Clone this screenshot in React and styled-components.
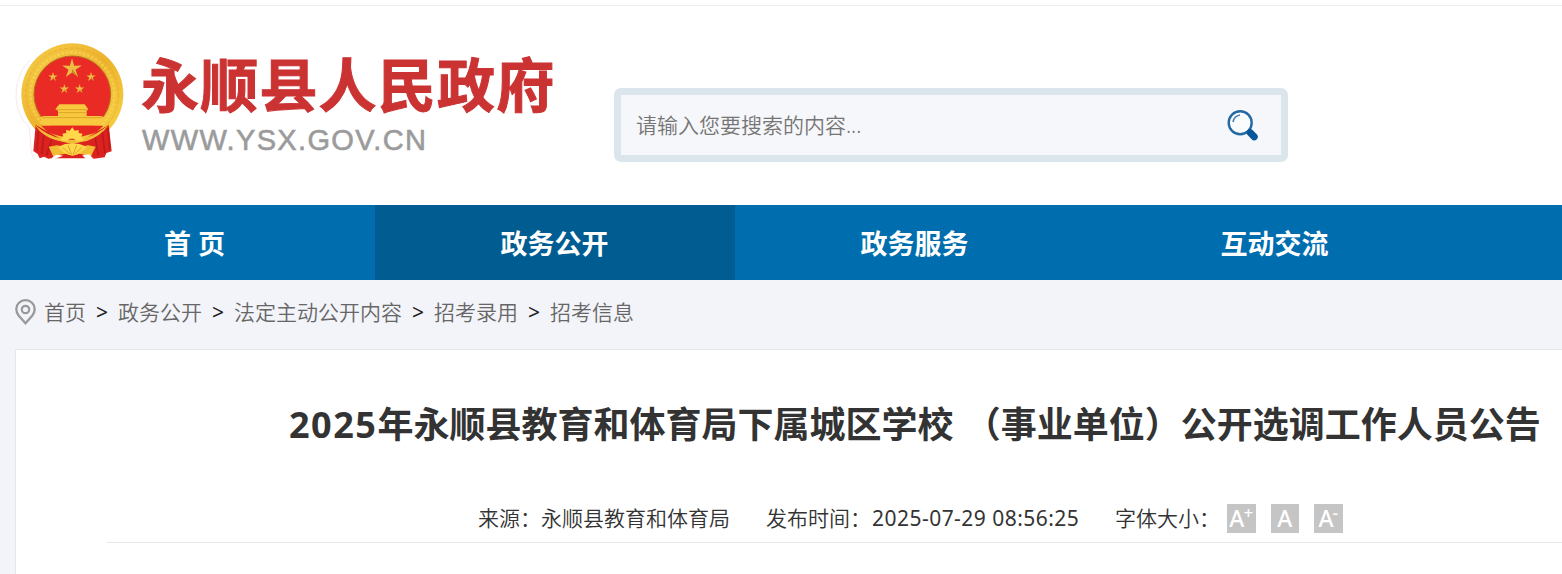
import React from "react";
import styled, { createGlobalStyle } from "styled-components";

const GlobalStyle = createGlobalStyle`
  * {
    box-sizing: border-box;
  }

  body {
    margin: 0;
    overflow: hidden;
    background: #f3f4f9;
    font-family: "Noto Sans", "Noto Sans CJK SC", sans-serif;
    color: #333;
  }
`;

const Page = styled.div`
  width: 1562px;
  height: 574px;
  overflow: hidden;
  display: flex;
  flex-direction: column;
`;

const TopLine = styled.div`
  height: 6px;
  flex: none;
  background: #fff;
  border-bottom: 1px solid #eee;
`;

const Header = styled.header`
  height: 199px;
  flex: none;
  display: flex;
  align-items: flex-start;
  background: #fff;
`;

const StyledEmblem = styled.svg`
  width: 140px;
  height: 145px;
  margin-top: 24px;
`;

const SiteName = styled.div`
  width: 474px;
  padding: 38px 0 0 1px;
`;

const SiteTitle = styled.h1`
  margin: 0;
  font-family: "Noto Sans CJK SC", sans-serif;
  font-size: 58px;
  line-height: 76px;
  font-weight: 700;
  letter-spacing: 1.2px;
  white-space: nowrap;
  color: #cb3333;
  -webkit-text-stroke: 1px #cb3333;
`;

const SiteUrl = styled.div`
  margin-top: 4px;
  padding-left: 1px;
  font-family: "Liberation Sans", Arial, sans-serif;
  font-size: 29px;
  line-height: 32px;
  letter-spacing: 1.35px;
  color: #9b9b9b;
  -webkit-text-stroke: 0.6px #9b9b9b;
`;

const SearchBox = styled.div`
  width: 674px;
  height: 74px;
  margin-top: 82px;
  padding: 0 22px 0 15px;
  display: flex;
  align-items: center;
  justify-content: space-between;
  background: #f5f7fa;
  background-clip: padding-box;
  border: 7px solid #dbe6ec;
  border-radius: 7px;
`;

const Placeholder = styled.span`
  font-size: 21px;
  line-height: 30px;
  font-weight: 350;
  color: #757575;
`;

const StyledSearchIcon = styled.svg`
  width: 34px;
  height: 34px;
`;

const Nav = styled.nav`
  height: 75px;
  flex: none;
  display: flex;
  padding-left: 15px;
  background: #006eae;
`;

const NavItem = styled.a`
  width: 360px;
  height: 75px;
  padding-right: 1px;
  line-height: 78px;
  text-align: center;
  font-size: 27px;
  font-weight: 700;
  color: #fff;
  background: ${({ $active }) => ($active ? "#005c91" : "transparent")};
`;

const Breadcrumb = styled.div`
  height: 69px;
  flex: none;
  display: flex;
  align-items: flex-start;
  padding: 17px 0 0 15px;
  font-size: 21px;
  line-height: 30px;
`;

const StyledPin = styled.svg`
  width: 21px;
  height: 26px;
  margin: 2px 8px 0 0;
`;

const Crumb = styled.a`
  font-weight: 350;
  color: #666;
`;

const Arrow = styled.span`
  width: 32px;
  text-align: center;
  color: #222;
`;

const Article = styled.main`
  flex: 1;
  margin-left: 15px;
  background: #fff;
  border: 1px solid #e6e6e6;
  border-right: 0;
  border-bottom: 0;
`;

const ArticleTitle = styled.h2`
  height: 54px;
  margin: 48px 0 0 273px;
  font-size: 36px;
  line-height: 54px;
  font-weight: 700;
  white-space: pre;
  word-spacing: 2px;
  color: #333;
`;

const TitleYear = styled.span`
  letter-spacing: 1.5px;
`;

const Meta = styled.div`
  height: 43px;
  margin: 48px 0 0 91px;
  padding-left: 371px;
  display: flex;
  align-items: flex-start;
  border-bottom: 1px solid #e6e6e6;
  font-size: 21px;
  line-height: 36px;
  font-weight: 350;
  white-space: nowrap;
`;

const MetaItem = styled.span`
  width: ${({ $width }) => $width}px;
`;

const MetaTime = styled.span`
  padding-left: 1px;
  font-weight: 400;
  letter-spacing: 0.47px;
`;

const SizeButtons = styled.div`
  display: flex;
  gap: 15px;
  padding-top: 4px;
`;

const SizeButton = styled.span`
  width: 28.5px;
  height: 29px;
  display: flex;
  justify-content: center;
  background: #c5c5c5;
  color: #fff;
  font-size: 23px;
  line-height: 29px;
  font-weight: 500;

  sup {
    margin-left: -1px;
    font-size: 17px;
    line-height: 17px;
  }
`;

// five-pointed star with its tip up
const starPoints = (cx, cy, r) =>
  Array.from({ length: 10 }, (_, i) => {
    const radius = i % 2 ? r * 0.36 : r;
    const angle = (Math.PI / 5) * i - Math.PI / 2;
    return `${cx + radius * Math.cos(angle)},${cy + radius * Math.sin(angle)}`;
  }).join(" ");

const stars = [
  [216, 116, 31],
  [159, 141, 15],
  [273, 141, 15],
  [193, 177, 15],
  [239, 177, 15],
];

const Emblem = () => (
  <StyledEmblem viewBox="0 0 420 435">
    <defs>
      <linearGradient id="gold" x1="0" y1="0" x2="1" y2="1">
        <stop offset="0" stopColor="#f6ce48" />
        <stop offset="0.5" stopColor="#edb32d" />
        <stop offset="1" stopColor="#f8d548" />
      </linearGradient>
    </defs>
    <path d="M90 90Q45 135 48 205Q53 260 88 292L94 370L103 384" fill="none" stroke="#f8e9e7" strokeWidth="3" />
    <circle cx="217" cy="193" r="153" fill="url(#gold)" />
    <circle cx="217" cy="193" r="139" fill="none" stroke="#e3a42b" strokeWidth="3" strokeDasharray="12 5" opacity="0.6" />
    <circle cx="217" cy="193" r="126" fill="none" stroke="#fbd75a" strokeWidth="8" strokeDasharray="9 4" opacity="0.6" />
    <circle cx="217" cy="193" r="115" fill="#ea2b25" stroke="#b66a22" strokeWidth="3" />
    {stars.map(([x, y, r]) => (
      <g key={`${x}-${y}`}>
        <polygon points={starPoints(x, y, r)} fill="#edbd43" />
        <path d={`M${x} ${y - r}V${y}L${x + r * 0.6} ${y + r * 0.8}L${x} ${y + r * 0.36}Z`} fill="#a96b23" opacity="0.65" />
      </g>
    ))}
    <path d="M178 223H254L265 238L260 242V258H303L313 262L304 287H129L121 262L131 258H174V242L166 238Z" fill="#f8c83f" />
    <path d="M170 239H262M174 248H260M128 263H306" stroke="#dfa326" strokeWidth="3" />
    <path d="M124 287H310L290 307Q250 322 217 322Q178 322 144 307Z" fill="#e72821" />
    <path d="M107 285L145 306L190 331L217 322L248 331L291 305L326 284L335 364L319 369L314 382L282 386L267 380L164 383L145 386L132 380L119 385L113 372L100 363Z" fill="#dc221f" />
    <path d="M115 305L111 361M132 309L125 372M155 329L140 376M306 302L315 371M285 320L295 376M324 295L329 358" stroke="#bd1a1b" strokeWidth="5" fill="none" />
    <path d="M104 284Q145 319 184 325Q217 334 250 325Q291 317 327 283L313 301Q279 333 247 335L217 342L187 335Q145 328 119 303Z" fill="#f1bd36" />
    <path d="M181 330L190 319L187 311L199 309L198 300L209 302L217 292L224 302L236 300L236 309L248 311L243 321L253 331L231 334L222 326H209L200 334Z" fill="#ffd94b" />
    <path d="M146 350L171 346L195 352L205 343H229L239 352L264 346L287 350Q276 370 272 383Q256 372 237 371L217 378L198 371Q174 372 162 384Z" fill="#f2bc35" />
    <path d="M174 350Q217 330 260 350Q241 375 217 376Q190 373 174 350Z" fill="#ffd64a" />
    <path d="M188 352L210 372M204 346L215 374M230 346L219 374M246 352L224 372" stroke="#dda02a" strokeWidth="3" />
    <path d="M163 385Q188 374 217 380Q247 374 270 385Z" fill="#d9201f" />
    <path d="M154 386Q164 374 172 374L190 377L165 386M247 376L268 373L280 386L257 386Z" fill="#fff" />
  </StyledEmblem>
);

const SearchIcon = () => (
  <StyledSearchIcon viewBox="0 0 34 34">
    <circle cx="15.2" cy="14.7" r="11.5" fill="#fafcfe" stroke="#2469a3" strokeWidth="2.4" />
    <path d="M8 14Q9 8.2 15 7" fill="none" stroke="#4d83b2" strokeWidth="1.7" />
    <path d="M23 22.5L25 24.5" stroke="#2469a3" strokeWidth="4" />
    <path d="M25.3 24.8L29.2 28.7" stroke="#07569a" strokeWidth="7" strokeLinecap="round" />
  </StyledSearchIcon>
);

const Pin = () => (
  <StyledPin viewBox="0 0 21 26" fill="none" stroke="#999">
    <path d="M3.8 16.8Q1.3 13.6 1.3 10A9.1 8.7 0 0 1 19.7 10Q19.7 13.6 17.2 16.8L10.5 24.2Z" strokeWidth="2.3" />
    <circle cx="10.5" cy="10.5" r="3.7" strokeWidth="2.2" />
  </StyledPin>
);

const navItems = ["首 页", "政务公开", "政务服务", "互动交流"];
const crumbs = ["首页", "政务公开", "法定主动公开内容", "招考录用", "招考信息"];

const App = () => (
  <Page>
    <GlobalStyle />
    <TopLine />
    <Header>
      <Emblem />
      <SiteName>
        <SiteTitle>永顺县人民政府</SiteTitle>
        <SiteUrl>WWW.YSX.GOV.CN</SiteUrl>
      </SiteName>
      <SearchBox>
        <Placeholder>请输入您要搜索的内容...</Placeholder>
        <SearchIcon />
      </SearchBox>
    </Header>
    <Nav>
      {navItems.map((item) => (
        <NavItem key={item} $active={item === "政务公开"}>
          {item}
        </NavItem>
      ))}
    </Nav>
    <Breadcrumb>
      <Pin />
      {crumbs.map((crumb, i) => (
        <React.Fragment key={crumb}>
          {i > 0 && <Arrow>&gt;</Arrow>}
          <Crumb>{crumb}</Crumb>
        </React.Fragment>
      ))}
    </Breadcrumb>
    <Article>
      <ArticleTitle>
        <TitleYear>2025</TitleYear>年永顺县教育和体育局下属城区学校 （事业单位）公开选调工作人员公告
      </ArticleTitle>
      <Meta>
        <MetaItem $width={288}>来源：永顺县教育和体育局</MetaItem>
        <MetaItem $width={349}>
          发布时间：<MetaTime>2025-07-29 08:56:25</MetaTime>
        </MetaItem>
        <MetaItem $width={112}>字体大小：</MetaItem>
        <SizeButtons>
          <SizeButton>
            A<sup>+</sup>
          </SizeButton>
          <SizeButton>A</SizeButton>
          <SizeButton>
            A<sup>-</sup>
          </SizeButton>
        </SizeButtons>
      </Meta>
    </Article>
  </Page>
);

export default App;
